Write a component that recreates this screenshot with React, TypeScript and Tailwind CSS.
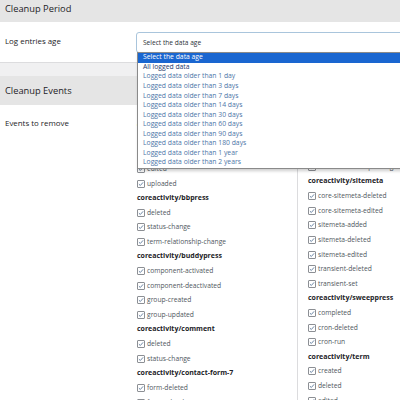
import React from "react";

const Check = () => (
  <span className="w-[8px] h-[8px] shrink-0 border border-[#8c8f94] rounded-[1px] bg-white flex items-center justify-center">
    <svg viewBox="0 0 8 8" className="w-[6px] h-[6px]">
      <path d="M1.2 4.2 L3.1 6 L6.8 1.8" stroke="#4f6f93" strokeWidth="1.1" fill="none" />
    </svg>
  </span>
);

type Row = { h?: string; i?: string };

const left: Row[] = [
  { h: "coreactivity/attachment" },
  { i: "deleted" },
  { i: "detached" },
  { i: "edited" },
  { i: "uploaded" },
  { h: "coreactivity/bbpress" },
  { i: "deleted" },
  { i: "status-change" },
  { i: "term-relationship-change" },
  { h: "coreactivity/buddypress" },
  { i: "component-activated" },
  { i: "component-deactivated" },
  { i: "group-created" },
  { i: "group-updated" },
  { h: "coreactivity/comment" },
  { i: "deleted" },
  { i: "status-change" },
  { h: "coreactivity/contact-form-7" },
  { i: "form-deleted" },
  { i: "form-edited" },
];

const right: Row[] = [
  { h: "coreactivity/post" },
  { i: "deleted" },
  { i: "status-change" },
  { i: "term-relationship-change" },
  { h: "coreactivity/sitemeta" },
  { i: "core-sitemeta-deleted" },
  { i: "core-sitemeta-edited" },
  { i: "sitemeta-added" },
  { i: "sitemeta-deleted" },
  { i: "sitemeta-edited" },
  { i: "transient-deleted" },
  { i: "transient-set" },
  { h: "coreactivity/sweeppress" },
  { i: "completed" },
  { i: "cron-deleted" },
  { i: "cron-run" },
  { h: "coreactivity/term" },
  { i: "created" },
  { i: "deleted" },
  { i: "edited" },
];

const Col = ({ rows }: { rows: Row[] }) => (
  <div className="flex flex-col">
    {rows.map((r, k) =>
      r.h ? (
        <div key={k} className="h-[14.6px] flex items-center text-[7px] font-bold text-[#1d2327] whitespace-nowrap">
          {r.h}
        </div>
      ) : (
        <div key={k} className="h-[14.6px] flex items-center gap-[2px] text-[6.7px] text-[#50575e] whitespace-nowrap">
          <Check />
          <span>{r.i}</span>
        </div>
      )
    )}
  </div>
);

const options = [
  "All logged data",
  "Logged data older than 1 day",
  "Logged data older than 3 days",
  "Logged data older than 7 days",
  "Logged data older than 14 days",
  "Logged data older than 30 days",
  "Logged data older than 60 days",
  "Logged data older than 90 days",
  "Logged data older than 180 days",
  "Logged data older than 1 year",
  "Logged data older than 2 years",
];

export default function App() {
  return (
    <div className="relative w-[400px] h-[400px] overflow-hidden bg-white font-['Open_Sans',sans-serif]">
      <div className="h-[22px] bg-[#e5e5e5] pt-[3px] pl-[5px] text-[9.3px] leading-[12px] text-[#1d2327]">
        Cleanup Period
      </div>
      <div className="h-[40px] flex bg-white">
        <div className="w-[136px] shrink-0 pl-[5px] pt-[13px] text-[7.9px] leading-[12px] text-[#1d2327]">
          Log entries age
        </div>
        <div className="pt-[10px] flex-1">
          <div className="h-[21px] w-[300px] border-[1.5px] border-[#a9c5dc] rounded-[3px] pl-[6px] flex items-center text-[6.6px] text-[#2c3338]">
            Select the data age
          </div>
        </div>
      </div>
      <div className="h-[14px] bg-[#f0f0f1] border-t border-[#dcdcde]" />
      <div className="h-[29px] bg-[#e5e5e5] flex items-center pl-[5px] text-[9.3px] text-[#1d2327]">
        Cleanup Events
      </div>
      <div className="flex">
        <div className="w-[137px] shrink-0 pl-[5px] pt-[11px] text-[7.9px] leading-[14px] text-[#1d2327]">
          Events to remove
        </div>
        <div className="w-[160px] shrink-0 pt-[13px]">
          <Col rows={left} />
        </div>
        <div className="flex-1 border-l border-[#dcdcde] pl-[10px] pt-[11px]">
          <Col rows={right} />
        </div>
      </div>

      <div className="absolute left-[137px] top-[52px] w-[300px] bg-white border border-[#8a8a8a] shadow-[1px_2px_3px_rgba(0,0,0,0.2)]">
        <div className="h-[9.5px] bg-[#1a66d0] pl-[5px] flex items-center text-[6.8px] text-white leading-none">
          Select the data age
        </div>
        {options.map((o, k) => (
          <div
            key={k}
            className={
              "h-[9.55px] pl-[5px] flex items-center text-[6.8px] leading-none " +
              (k === 0 ? "text-[#23386b]" : "text-[#4d76a8]")
            }
          >
            {o}
          </div>
        ))}
      </div>
    </div>
  );
}
